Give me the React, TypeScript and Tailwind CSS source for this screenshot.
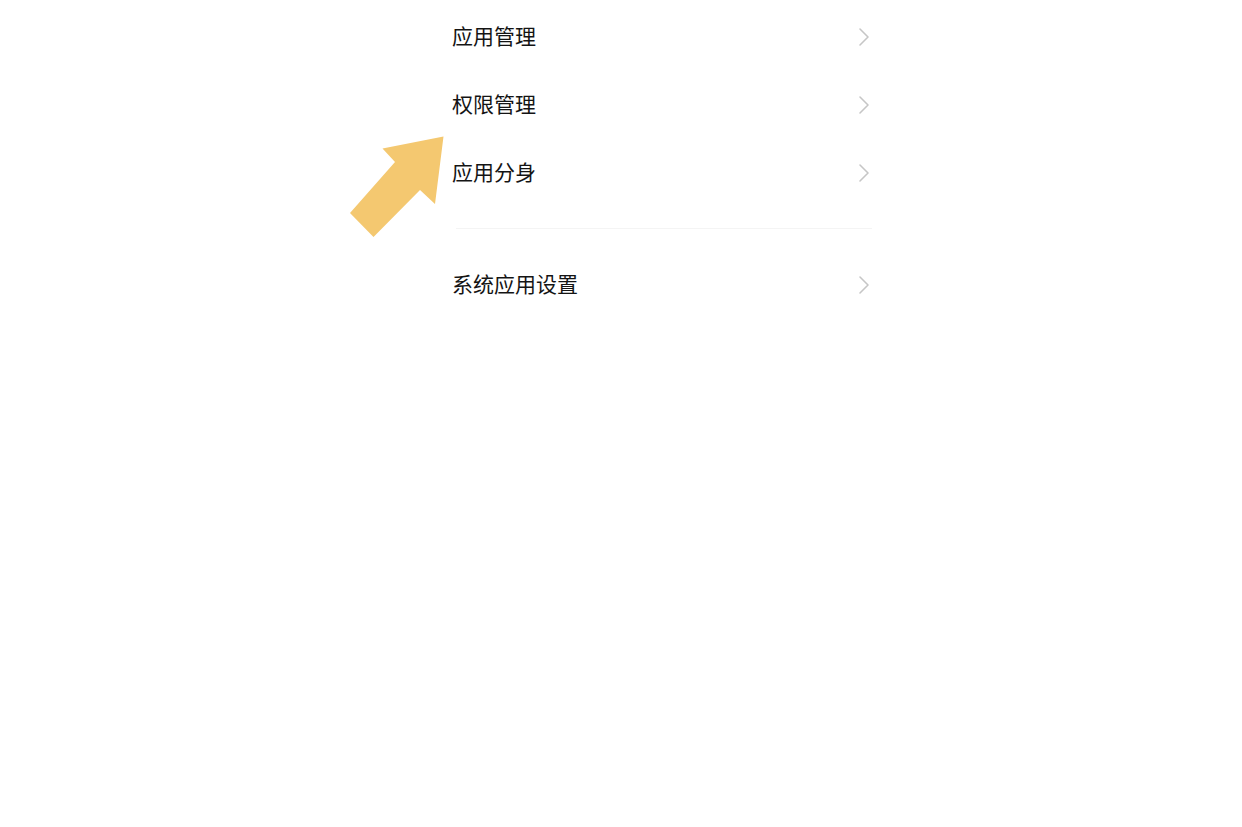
const items = ['应用管理', '权限管理', '应用分身'];

const Chevron = () => (
  <svg width="14" height="20" viewBox="0 0 14 20" fill="none" className="shrink-0">
    <polyline points="3,2 11,10 3,18" stroke="#c6c6c6" strokeWidth="1.6" strokeLinejoin="round" strokeLinecap="round" />
  </svg>
);

const Row = ({ label }: { label: string }) => (
  <div className="h-[68px] flex items-center justify-between pr-[1px]">
    <span className="text-[21px] leading-none text-[#141414] pb-[4px]">{label}</span>
    <Chevron />
  </div>
);

export default function App() {
  return (
    <div
      className="relative w-[1242px] h-[827px] bg-white overflow-hidden"
      style={{ fontFamily: '"Noto Sans CJK SC", "Noto Sans", sans-serif' }}
    >
      <div className="ml-[452px] w-[420px] pt-[3px]">
        {items.map((label) => (
          <Row key={label} label={label} />
        ))}
        <div className="mt-[21px] ml-[4px] h-px bg-[#f4f4f4]" />
        <div className="mt-[22px]">
          <Row label="系统应用设置" />
        </div>
      </div>

      {/* annotation arrow */}
      <svg className="absolute left-0 top-0" width="1242" height="827" viewBox="0 0 1242 827">
        <polygon
          points="443.5,136.5 382.5,148.5 395,162 350,213 373.5,237 420,190 435,204"
          fill="#f4c870"
        />
      </svg>
    </div>
  );
}
